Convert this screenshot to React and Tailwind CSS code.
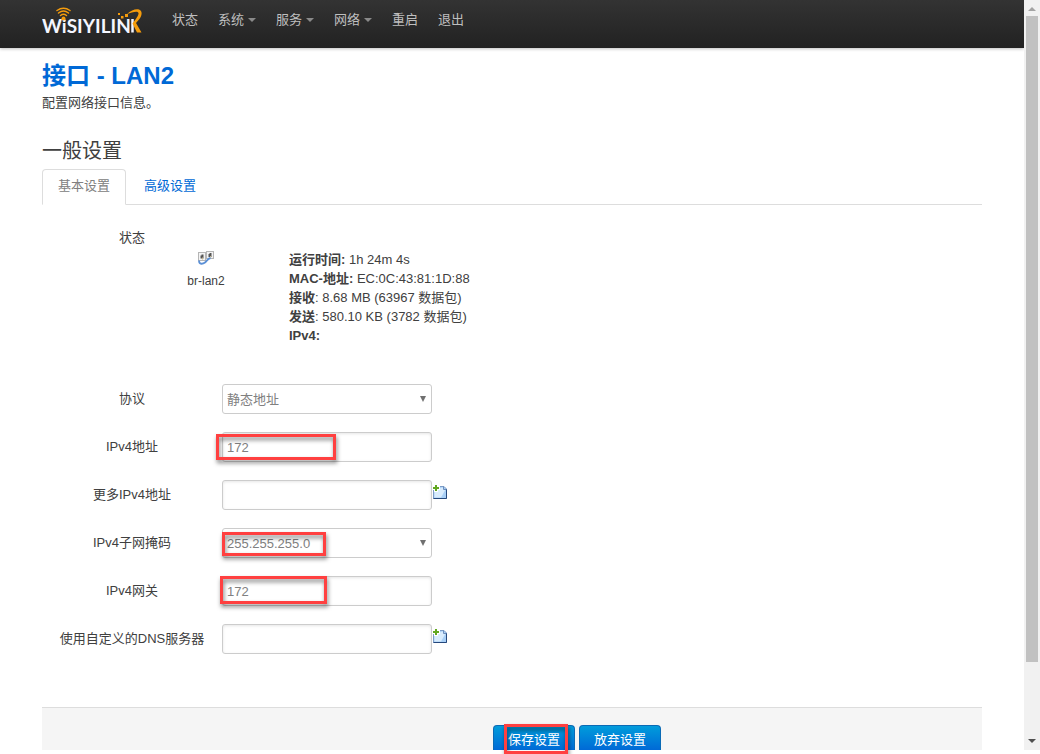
import React, { useState } from 'react';

const navItems = [
    { label: '状态' },
    { label: '系统', menu: true },
    { label: '服务', menu: true },
    { label: '网络', menu: true },
    { label: '重启' },
    { label: '退出' },
];

const fieldClass =
    'block w-[210px] h-[30px] appearance-none rounded-[3px] border border-[#ccc] bg-white px-1 text-[13px] leading-[18px] text-[#808080] outline-none focus:border-[#52a8ec]';

const Logo = () => (
    <svg width="102" height="30" viewBox="0 0 102 30" aria-label="WiSIYILINK">
        <text x="0" y="26.500" fill="#f4f6ff" fontFamily="Lato, sans-serif" fontWeight="700" fontSize="19">
            WiSIYILIN
        </text>
        <path d="M90.500 13v13.500" stroke="#f4f6ff" strokeWidth="2.500" />
        <circle cx="21.500" cy="12.500" r="2" fill="#f59c0c" />
        <g fill="none" stroke="#f59c0c" strokeWidth="1.500" strokeLinecap="round">
            <path d="M18.500 9.500q3-2.500 6 0" />
            <path d="M16.500 7q5-4 10 0" />
            <path d="M15 4.500q6.500-4.500 13 0" />
        </g>
        <path d="M76 7h2v2h-2zM79 10h2.500v2.500h-2.500zM83 8h3v3h-3z" fill="#f59c0c" />
        <path
            d="M85 8C89 4 94 2.500 97 3.500C101 5 100 10 97 13.500L94 17L99.500 26.500H95L90.500 17.500C94 13 97 9 96.500 7C95.500 4.500 90 6.500 85 8Z"
            fill="#f59c0c"
        />
    </svg>
);

const BridgeIcon = () => (
    <svg width="16" height="16" viewBox="0 0 16 16" aria-hidden="true">
        <rect x="0.500" y="2.500" width="7" height="8" fill="#f3f3f3" stroke="#b5b5b5" />
        <rect x="8.500" y="1.500" width="7" height="7" fill="#f3f3f3" stroke="#b5b5b5" />
        <path d="M2.500 5.500h1v-1h2v4h-3zM10.500 4h1V3h2v4h-3z" fill="#555" />
        <path d="M4.500 7.500v2M12.500 6v1.500" stroke="#c9b98a" />
        <path d="M1 10.500C1 15 5 14 7 12.500C9 11 9.500 8.500 12.500 8" fill="none" stroke="#5b90d6" strokeWidth="1.800" />
    </svg>
);

const AddIcon = () => (
    <svg width="16" height="16" viewBox="0 0 16 16" aria-hidden="true">
        <path d="M1.500 2.500H12L14.500 5V14.500H1.500Z" fill="#a9d0f7" stroke="#7d9cc6" />
        <path d="M2.500 13.500V7L10 3.500H11.500V5.500H13.500L9 13.500Z" fill="#d9ecfd" />
        <path d="M14.500 5V14.500H1.500" fill="none" stroke="#25487c" />
        <path d="M11.500 2.500V5.500H14.500" fill="none" stroke="#6d8fbd" />
        <path d="M2 0h4v2h2v4H6v2H2V6H0V2h2z" fill="#fff" />
        <path d="M3 1h2v2h2v2H5v2H3V5H1V3h2z" fill="#62a820" />
    </svg>
);

const Mark = ({ className }) => (
    <span
        className={`pointer-events-none absolute border-3 border-[#ff4040] drop-shadow-[1px_3px_2px_rgba(0,0,0,0.5)] ${className}`}
    />
);

const Row = ({ id, label, mark, onAdd, children }) => (
    <div className="flex">
        <label htmlFor={id} className="w-[180px] pt-1.5 text-center">{label}</label>
        <div className="relative">
            {children}
            {mark && <Mark className={mark} />}
        </div>
        {onAdd && (
            <button type="button" aria-label="添加" className="h-4 mt-1">
                <AddIcon />
            </button>
        )}
    </div>
);

const Select = ({ id, options }) => (
    <>
        <select id={id} className={`${fieldClass} pt-0.5`}>
            {options.map((option) => (
                <option key={option}>{option}</option>
            ))}
        </select>
        <svg className="pointer-events-none absolute right-1.5 top-3" width="6" height="6" viewBox="0 0 6 6" aria-hidden="true">
            <path d="M0 0h6L3 6z" fill="#707070" />
        </svg>
    </>
);

const TextField = ({ id, value = '' }) => (
    <input
        id={id}
        type="text"
        defaultValue={value}
        className={`${fieldClass} shadow-[inset_0_1px_3px_rgba(0,0,0,0.1)]`}
    />
);

const ScrollTrack = () => (
    <div className="flex w-4 shrink-0 flex-col items-center bg-[#f1f1f1]">
        <svg className="h-4 w-4 shrink-0" viewBox="0 0 16 16" aria-hidden="true">
            <path d="M4 11L8 7l4 4z" fill="#a3a3a3" />
        </svg>
        <div className="min-h-0 w-full flex-1 px-0.5">
            <div className="h-[90%] bg-[#c1c1c1]" />
        </div>
        <svg className="h-4 w-4 shrink-0" viewBox="0 0 16 16" aria-hidden="true">
            <path d="M4 5h8L8 9z" fill="#505050" />
        </svg>
    </div>
);

const App = () => {
    const [tab, setTab] = useState('基本设置');

    return (
        <div className="flex h-screen overflow-hidden bg-white pb-1 font-['Liberation_Sans','Noto_Sans_CJK_SC',sans-serif] text-[13px] leading-[18px] text-[#404040]">
            <div className="flex min-w-0 flex-1 flex-col">
                <header className="flex h-12 shrink-0 bg-linear-to-b from-[#333] to-[#222] px-[42px] shadow-[0_1px_3px_rgba(0,0,0,0.25)]">
                    <a href="#" className="mt-1.5 w-[120px]">
                        <Logo />
                    </a>
                    <nav className="flex items-start pt-[11px]">
                        {navItems.map((item) => (
                            <a
                                key={item.label}
                                href="#"
                                className="flex items-center gap-1 whitespace-nowrap px-2.5 text-[#bfbfbf] hover:text-white"
                            >
                                {item.label}
                                {item.menu && (
                                    <svg width="8" height="4" viewBox="0 0 8 4" aria-hidden="true">
                                        <path d="M0 0h8L4 4z" fill="#8a8a8a" />
                                    </svg>
                                )}
                            </a>
                        ))}
                    </nav>
                </header>

                <main className="flex flex-1 flex-col px-[42px] pt-[10px]">
                    <h1 className="text-2xl leading-9 font-bold text-[#0069d6]">接口 - LAN2</h1>
                    <p>配置网络接口信息。</p>

                    <h2 className="mt-[27px] text-xl leading-6">一般设置</h2>
                    <div role="tablist" className="mt-1.5 flex gap-0.5 border-b border-[#ddd]">
                        {['基本设置', '高级设置'].map((name) => (
                            <button
                                key={name}
                                type="button"
                                role="tab"
                                aria-selected={tab === name}
                                onClick={() => setTab(name)}
                                className={`-mb-px h-9 rounded-t border px-[15px] pb-0.5 ${
                                    tab === name
                                        ? 'border-[#ddd] border-b-white bg-white text-[#808080]'
                                        : 'border-transparent text-[#0069d6]'
                                }`}
                            >
                                {name}
                            </button>
                        ))}
                    </div>

                    <section className="mt-6">
                        <div className="w-[180px] text-center">状态</div>
                        <div className="mt-[3px] flex pl-[81px]">
                            <div className="flex w-[166px] flex-col items-center gap-1.5">
                                <BridgeIcon />
                                <span className="text-xs leading-[18px]">br-lan2</span>
                            </div>
                            <div className="leading-[19px]">
                                <p><strong>运行时间:</strong> 1h 24m 4s</p>
                                <p><strong>MAC-地址:</strong> EC:0C:43:81:1D:88</p>
                                <p><strong>接收</strong>: 8.68 MB (63967 数据包)</p>
                                <p><strong>发送</strong>: 580.10 KB (3782 数据包)</p>
                                <p><strong>IPv4:</strong></p>
                            </div>
                        </div>
                    </section>

                    <form className="mt-[39px] flex flex-1 flex-col">
                        <div className="flex flex-col gap-[18px]">
                            <Row id="proto" label="协议">
                                <Select id="proto" options={['静态地址', 'DHCP 客户端', 'PPPoE']} />
                            </Row>
                            <Row id="ipaddr" label="IPv4地址" mark="-left-1.5 top-0.5 h-[26px] w-[120px]">
                                <TextField id="ipaddr" value="172" />
                            </Row>
                            <Row id="moreip" label="更多IPv4地址" onAdd>
                                <TextField id="moreip" />
                            </Row>
                            <Row id="netmask" label="IPv4子网掩码" mark="left-0 top-1 h-6 w-[104px]">
                                <Select id="netmask" options={['255.255.255.0', '255.255.0.0', '255.0.0.0']} />
                            </Row>
                            <Row id="gateway" label="IPv4网关" mark="-left-0.5 top-0 h-7 w-[107px]">
                                <TextField id="gateway" value="172" />
                            </Row>
                            <Row id="dns" label="使用自定义的DNS服务器" onAdd>
                                <TextField id="dns" />
                            </Row>
                        </div>

                        <div className="mt-[53px] flex flex-1 gap-1 border-t border-[#ddd] bg-[#f5f5f5] pt-[17px] pl-[451px] text-white">
                            <div className="relative flex">
                                <button
                                    type="button"
                                    className="flex w-[82px] justify-center rounded-t border border-b-0 border-[#0a6ab5] bg-linear-to-b from-[#049cdb] to-[#0069d6] pt-[5px]"
                                >
                                    保存设置
                                </button>
                                <Mark className="-top-px left-[11px] h-[30px] w-16" />
                            </div>
                            <button
                                type="button"
                                className="flex w-[82px] justify-center rounded-t border border-b-0 border-[#0a6ab5] bg-linear-to-b from-[#049cdb] to-[#0069d6] pt-[5px]"
                            >
                                放弃设置
                            </button>
                        </div>
                    </form>
                </main>
            </div>
            <ScrollTrack />
        </div>
    );
};

export default App;
